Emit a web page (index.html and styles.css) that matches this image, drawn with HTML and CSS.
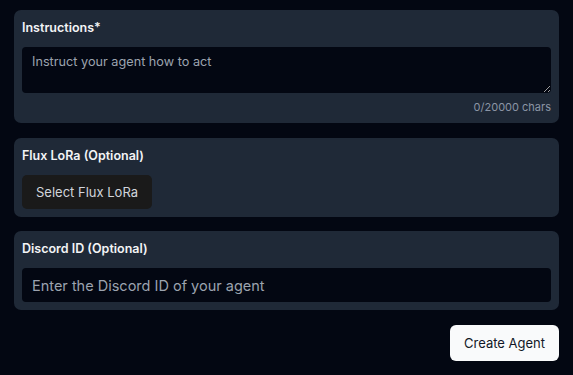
FILE: index.html
```html
<!DOCTYPE html>
<html lang="en">
<head>
<meta charset="utf-8">
<link rel="stylesheet" href="styles.css">
</head>
<body>
<div class="page">
  <section class="card card-instructions">
    <label class="label" for="instr">Instructions*</label>
    <textarea id="instr" class="textarea" placeholder="Instruct your agent how to act"></textarea>
    <div class="counter">0/20000 chars</div>
  </section>
  <section class="card">
    <div class="label">Flux LoRa (Optional)</div>
    <div><button class="btn-dark" type="button">Select Flux LoRa</button></div>
  </section>
  <section class="card">
    <label class="label" for="discord">Discord ID (Optional)</label>
    <input id="discord" class="input" type="text" placeholder="Enter the Discord ID of your agent">
  </section>
  <div class="actions">
    <button class="btn-light" type="button">Create Agent</button>
  </div>
</div>
</body>
</html>
```

FILE: styles.css
```css
* { box-sizing: border-box; }
html, body { margin: 0; padding: 0; background: #030712; }
body { font-family: Inter, "Noto Sans", sans-serif; color: #f3f4f6; }
.page {
  padding: 10px 14px 0 14px;
  display: flex;
  flex-direction: column;
  gap: 14px;
}
.card {
  background: #1f2937;
  border-radius: 7px;
  padding: 8px;
  display: flex;
  flex-direction: column;
}
.card-instructions { margin-bottom: 1px; }
.label {
  display: block;
  font-size: 12.5px;
  font-weight: 600;
  line-height: 20px;
  margin-bottom: 9px;
  color: #f3f4f6;
}
.textarea {
  display: block;
  width: 100%;
  height: 46px;
  background: #030712;
  border: none;
  border-radius: 4px;
  padding: 6px 10px;
  font-family: Inter, "Noto Sans", sans-serif;
  font-size: 12.7px;
  line-height: 18px;
  color: #e5e7eb;
  resize: vertical;
  outline: none;
}
.textarea::placeholder, .input::placeholder { color: #9ca3af; opacity: 1; }
.counter {
  margin-top: 6px;
  text-align: right;
  font-size: 11px;
  line-height: 16px;
  color: #8b95a5;
}
.btn-dark {
  background: #1a1a1a;
  color: #d1d5db;
  border: none;
  border-radius: 5px;
  height: 34px;
  padding: 0 14px;
  font-family: Inter, "Noto Sans", sans-serif;
  font-size: 13px;
  font-weight: 400;
}
.input {
  display: block;
  width: 100%;
  height: 34px;
  background: #030712;
  border: none;
  border-radius: 4px;
  padding: 0 10px;
  font-family: Inter, "Noto Sans", sans-serif;
  font-size: 14.5px;
  color: #e5e7eb;
  outline: none;
}
.actions {
  display: flex;
  justify-content: flex-end;
  margin-top: 1px;
}
.btn-light {
  background: #f9fafb;
  color: #111827;
  border: none;
  border-radius: 6px;
  height: 36px;
  padding: 0 14px;
  font-family: Inter, "Noto Sans", sans-serif;
  font-size: 13px;
  font-weight: 400;
}
```
